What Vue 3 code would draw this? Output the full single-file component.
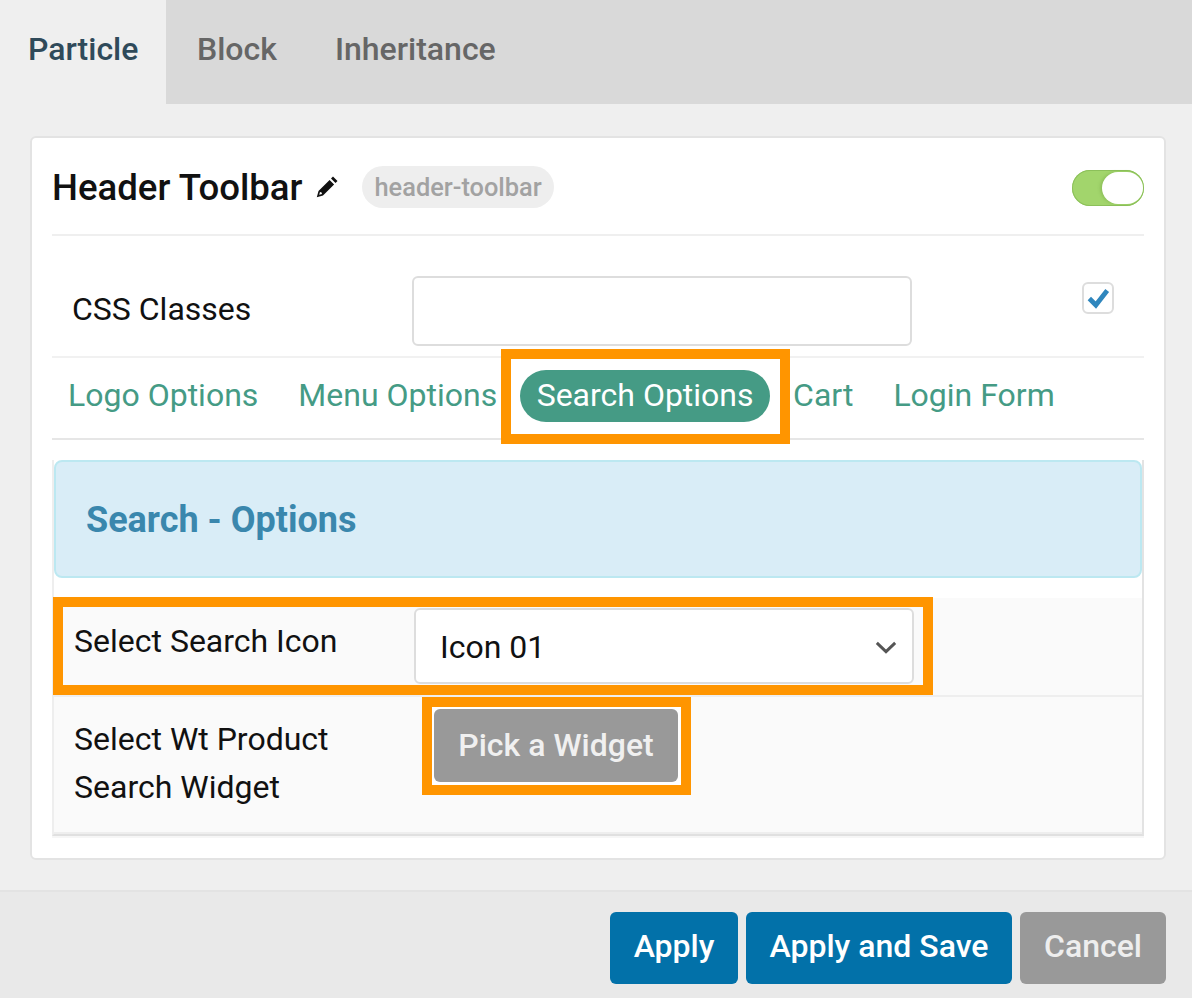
<script setup>
const tabs = [
  { label: 'Particle', active: true },
  { label: 'Block', active: false },
  { label: 'Inheritance', active: false },
]
</script>

<template>
  <div class="page">
    <nav class="tabs">
      <div v-for="t in tabs" :key="t.label" class="tab" :class="{ active: t.active }">{{ t.label }}</div>
    </nav>

    <main class="main">
      <section class="card">
        <header class="head">
          <h1 class="title">Header Toolbar</h1>
          <svg class="pencil" viewBox="0 0 24 24" width="24" height="24">
            <path fill="#111" fill-rule="evenodd" d="M18 1.500 22.500 6 20.500 8 16 3.500ZM14.600 4.900 19.100 9.400 8 20.500 1.800 22.200 3.500 16ZM5 17 4.200 19.800 7 19 6.600 17.400Z" />
          </svg>
          <span class="chip">header-toolbar</span>
          <span class="toggle"><span class="knob"></span></span>
        </header>

        <div class="css-row">
          <label class="css-label">CSS Classes</label>
          <div class="input"></div>
          <span class="check">
            <svg viewBox="0 0 24 24" width="26" height="26">
              <path fill="none" stroke="#2f86bd" stroke-width="4.400" stroke-linejoin="miter" d="M4 12.500 10 18.500 20.500 5" />
            </svg>
          </span>
        </div>

        <div class="subtabs">
          <span class="sub first">Logo Options</span>
          <span class="sub second">Menu Options</span>
          <span class="pill">Search Options<i class="mark mark-pill"></i></span>
          <span class="sub third">Cart</span>
          <span class="sub fourth">Login Form</span>
        </div>

        <div class="panel">
          <div class="alert">Search - Options</div>

          <div class="row row-icon">
            <i class="mark mark-row"></i>
            <div class="row-label">Select Search Icon</div>
            <div class="select">
              <span>Icon 01</span>
              <svg class="chevron" viewBox="0 0 24 14" width="22" height="13">
                <path fill="none" stroke="#555" stroke-width="3.200" d="M2 2 12 11.500 22 2" />
              </svg>
            </div>
          </div>

          <div class="row row-widget">
            <div class="row-label two">Select Wt Product<br />Search Widget</div>
            <div class="pick-wrap">
              <i class="mark mark-pick"></i>
              <button class="pick" type="button">Pick a Widget</button>
            </div>
          </div>
        </div>
      </section>
    </main>

    <footer class="footer">
      <button class="btn blue apply" type="button">Apply</button>
      <button class="btn blue save" type="button">Apply and Save</button>
      <button class="btn gray cancel" type="button">Cancel</button>
    </footer>
  </div>
</template>

<style>
html, body { margin: 0; background: #efefef; }
</style>

<style scoped>
.page {
  width: 1192px;
  height: 998px;
  display: flex;
  flex-direction: column;
  background: #efefef;
  font-family: Roboto, "Liberation Sans", sans-serif;
  overflow: hidden;
}
.tabs {
  height: 104px;
  flex: none;
  display: flex;
  background: #d9d9d9;
}
.tab {
  padding: 0 27px 0 31px;
  line-height: 98px;
  font-size: 32px;
  font-weight: 500;
  color: #666;
}
.tab.active {
  box-sizing: border-box;
  width: 166px;
  padding: 0 0 0 28px;
  background: #efefef;
  color: #2f4a5a;
}
.main {
  flex: 1;
  padding: 32px 26px 0 30px;
}
.card {
  box-sizing: border-box;
  height: 724px;
  border: 2px solid #e3e3e3;
  border-radius: 6px;
  background: #fff;
  padding: 0 20px;
}
.head {
  height: 98px;
  box-sizing: border-box;
  display: flex;
  align-items: center;
  padding-top: 2px;
  border-bottom: 2px solid #efefef;
}
.title {
  margin: 0;
  font-size: 36.600px;
  font-weight: 500;
  color: #111;
}
.pencil {
  margin-left: 13px;
  margin-top: -1px;
}
.chip {
  margin-left: 23px;
  height: 42px;
  line-height: 42px;
  padding: 0 12px;
  border-radius: 21px;
  background: #eee;
  color: #a2a2a2;
  font-size: 25.400px;
  font-weight: 500;
}
.toggle {
  margin-left: auto;
  margin-top: 2px;
  box-sizing: border-box;
  width: 72px;
  height: 36px;
  border-radius: 18px;
  background: #a2d56c;
  display: flex;
  justify-content: flex-end;
  align-items: center;
  padding-right: 1px;
  box-shadow: inset 0 0 0 1px #8cc05a;
}
.knob {
  width: 41px;
  height: 32px;
  border-radius: 16px;
  background: #fff;
  box-shadow: -2px 0 3px rgba(120, 170, 70, 0.45);
}
.css-row {
  height: 122px;
  box-sizing: border-box;
  display: flex;
  align-items: flex-start;
  border-bottom: 2px solid #f1f1f1;
}
.css-label {
  margin: 50px 0 0 20px;
  width: 340px;
  font-size: 32px;
  line-height: 46px;
  color: #111;
}
.input {
  margin-top: 40px;
  width: 500px;
  height: 70px;
  box-sizing: border-box;
  border: 2px solid #ddd;
  border-radius: 6px;
  background: #fff;
}
.check {
  margin: 46px 0 0 170px;
  width: 32px;
  height: 32px;
  box-sizing: border-box;
  border: 2px solid #ddd;
  border-radius: 6px;
  display: flex;
  align-items: center;
  justify-content: center;
}
.subtabs {
  height: 82px;
  box-sizing: border-box;
  display: flex;
  align-items: flex-start;
  border-bottom: 2px solid #e6e6e6;
  font-size: 32px;
  color: #459b85;
}
.sub {
  line-height: 50px;
  margin-top: 12px;
}
.first { margin-left: 16px; }
.second { margin-left: 40px; }
.third { margin-left: 23px; }
.fourth { margin-left: 40px; }
.pill {
  position: relative;
  margin: 12px 0 0 23px;
  height: 52px;
  line-height: 50px;
  padding: 0 16.500px;
  border-radius: 26px;
  background: #459b85;
  color: #fff;
}
.mark {
  position: absolute;
  display: block;
  box-sizing: border-box;
  border: 10px solid #ff9500;
  pointer-events: none;
  z-index: 2;
}
.mark-pill { left: -19px; top: -21px; right: -20px; bottom: -22px; }
.mark-row { left: -1px; top: -1px; width: 880px; height: 98px; }
.mark-pick { left: -10px; top: -10px; right: -10px; bottom: -10px; }
.panel {
  margin-top: 20px;
  height: 376px;
  box-sizing: border-box;
  border-left: 2px solid #eee;
  border-right: 2px solid #e3e3e3;
  border-bottom: 2px solid #e0e0e0;
  box-shadow: 0 2px 0 #f6f6f6;
}
.alert {
  height: 118px;
  box-sizing: border-box;
  padding-left: 30px;
  border: 2px solid #bce8f1;
  border-radius: 8px;
  background: #d9edf7;
  color: #3a87ad;
  font-size: 36px;
  font-weight: 700;
  line-height: 116px;
}
.row {
  position: relative;
  display: flex;
  background: #fafafa;
}
.row-icon {
  margin-top: 20px;
  height: 97px;
}
.row-widget {
  box-sizing: border-box;
  height: 139px;
  border-top: 2px solid #eee;
  border-bottom: 2px solid #eee;
}
.row-label {
  margin-left: 20px;
  width: 340px;
  flex: none;
  font-size: 32px;
  line-height: 48px;
  color: #111;
}
.row-icon .row-label { margin-top: 19px; }
.row-label.two { margin-top: 18px; }
.select {
  margin-top: 10px;
  width: 500px;
  height: 76px;
  box-sizing: border-box;
  border: 2px solid #ddd;
  border-radius: 6px;
  background: #fff;
  display: flex;
  align-items: center;
  justify-content: space-between;
  padding: 2px 15px 0 24px;
  font-size: 32px;
  color: #111;
}
.chevron {
  margin-top: 1px;
}
.pick-wrap {
  position: relative;
  box-sizing: border-box;
  margin: 10px 0 0 18px;
  width: 249px;
  height: 78px;
  padding: 2px 3px 3px 2px;
  align-self: flex-start;
  background: #fff;
}
.pick {
  display: block;
  width: 244px;
  height: 73px;
  padding: 0 0 2px;
  border: 0;
  border-radius: 6px;
  background: #999;
  color: #f0f0f0;
  font: 500 32px Roboto, "Liberation Sans", sans-serif;
}
.footer {
  height: 108px;
  flex: none;
  box-sizing: border-box;
  border-top: 2px solid #e3e3e3;
  background: #e9e9e9;
  display: flex;
  justify-content: flex-end;
  gap: 8px;
  padding: 20px 26px 0 0;
}
.btn {
  height: 72px;
  padding: 0 0 4px;
  border: 0;
  border-radius: 6px;
  color: #fff;
  font: 500 32px Roboto, "Liberation Sans", sans-serif;
}
.blue { background: #0271a9; }
.gray { background: #999; color: #eee; }
.apply { width: 128px; }
.save { width: 266px; }
.cancel { width: 146px; }
</style>
